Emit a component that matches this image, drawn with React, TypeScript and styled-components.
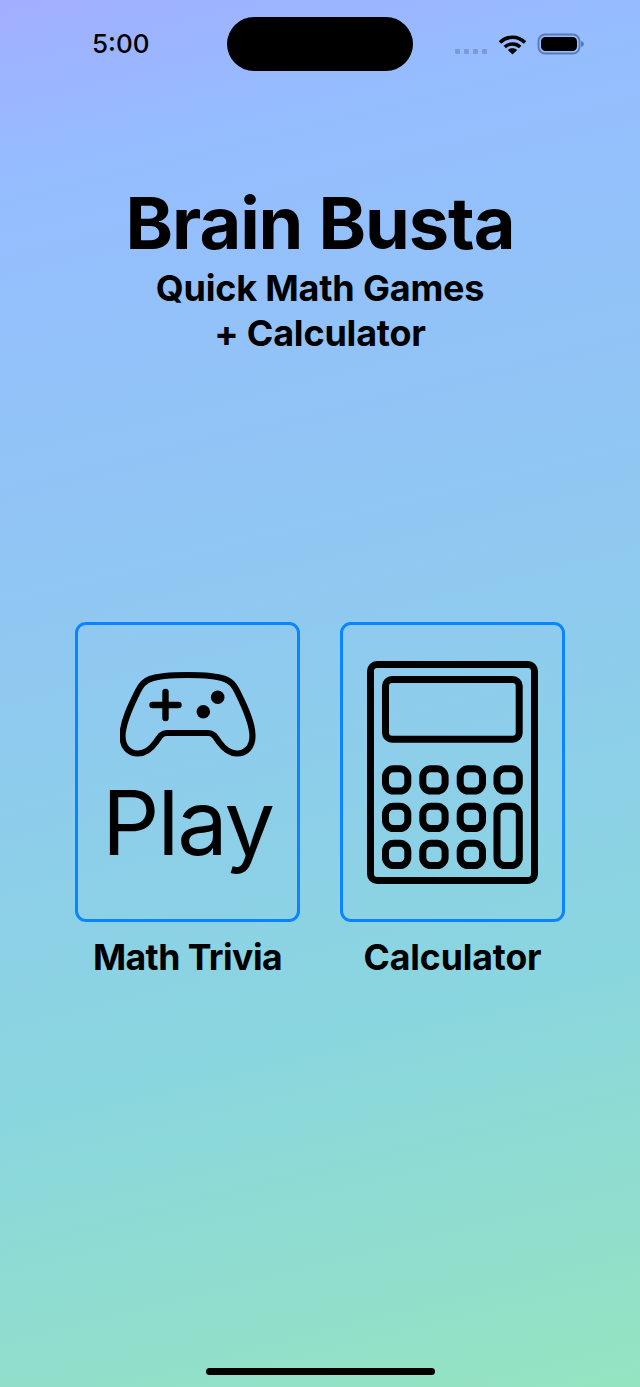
import * as React from 'react';
import styled, { createGlobalStyle } from 'styled-components';

const GlobalStyle = createGlobalStyle`
  html, body {
    margin: 0;
    padding: 0;
    background: #94e0c4;
  }
  * {
    box-sizing: border-box;
  }
`;

const Screen = styled.div`
  width: 640px;
  height: 1387px;
  display: flex;
  flex-direction: column;
  overflow: hidden;
  color: #000;
  font-family: Inter, "Liberation Sans", sans-serif;
  background: linear-gradient(166deg, #a2aeff 0%, #95bdff 12%, #8fc9f0 45%, #8ad6df 72%, #95e4c0 100%);
`;

const StatusBar = styled.div`
  display: flex;
  align-items: center;
  height: 54px;
  margin-top: 17px;
`;

const Time = styled.div`
  width: 227px;
  padding-left: 92px;
  font-size: 26px;
  font-weight: 500;
  line-height: 54px;
`;

const Island = styled.div`
  width: 186px;
  height: 54px;
  border-radius: 27px;
  background: #000;
`;

const StatusIcons = styled.div`
  display: flex;
  align-items: flex-start;
  height: 54px;
  padding: 16px 0 0 42px;
`;

const Header = styled.header`
  display: flex;
  flex-direction: column;
  align-items: center;
  margin-top: 108px;
`;

const Title = styled.h1`
  margin: 0;
  font-size: 72px;
  font-weight: 700;
  line-height: 88px;
  letter-spacing: -1.05px;
`;

const Subtitle = styled.p`
  margin: -1px 0 0;
  font-size: 36px;
  font-weight: 650;
  line-height: 45px;
  text-align: center;
  letter-spacing: -0.2px;
`;

const Menu = styled.main`
  display: flex;
  justify-content: center;
  gap: 40px;
  margin-top: 266px;
`;

const MenuItem = styled.div`
  display: flex;
  flex-direction: column;
  align-items: center;
  width: 225px;
`;

const Tile = styled.button`
  display: flex;
  flex-direction: column;
  align-items: center;
  justify-content: center;
  width: 225px;
  height: 300px;
  padding: 0;
  border: 3px solid #0a84ff;
  border-radius: 11px;
  background: transparent;
  color: #000;
  font-family: inherit;
`;

const PlayText = styled.span`
  font-size: 90px;
  font-weight: 400;
  line-height: 104px;
  margin-top: 13px;
  letter-spacing: -2px;
`;

const Label = styled.div<{ $tracking: number }>`
  margin-top: 13px;
  font-size: 35.6px;
  font-weight: 650;
  line-height: 46px;
  text-align: center;
  white-space: nowrap;
  letter-spacing: ${(props) => props.$tracking}px;
`;

const HomeIndicator = styled.div`
  width: 229px;
  height: 7px;
  margin: auto auto 12px;
  border-radius: 4px;
  background: #000;
`;

const StatusIconsSvg = () => (
  <svg width="130" height="24" viewBox="0 0 130 24">
    <g fill="#7c9ad6">
      <rect x="0" y="16" width="5" height="5" rx="1" />
      <rect x="9" y="16" width="5" height="5" rx="1" />
      <rect x="18" y="16" width="5" height="5" rx="1" />
      <rect x="27" y="16" width="5" height="5" rx="1" />
    </g>
    <g fill="none" stroke="#000" strokeWidth="3.6">
      <path d="M45 9.5 C52 2.5 63 2.5 70 9.5" />
      <path d="M49.8 14 C54 10 61 10 65.2 14" />
    </g>
    <path d="M57.5 21.5 L52.8 17 C55.5 14.8 59.5 14.8 62.2 17 Z" fill="#000" />
    <rect x="83.5" y="1.5" width="41" height="19" rx="6.5" fill="none" stroke="#5a7ab5" strokeWidth="1.8" />
    <rect x="86" y="4" width="36" height="14" rx="4.5" fill="#000" />
    <path d="M126 8 C128 8.5 129 10 129 11 C129 12 128 13.5 126 14 Z" fill="#5a7ab5" />
  </svg>
);

const GamepadIcon = () => (
  <svg width="136" height="88" viewBox="15 10 136 88">
    <path
      d="M82.5 15 C100 15 112 16 120 19 C126 21 129 25 132 31 C138 43 147.5 62 147.5 76 C147.5 87 141 93.5 132 93.5 C124 93.5 119 89 114 82 C110 76 108 73 103 73 L62 73 C57 73 55 76 51 82 C46 89 41 93.5 33 93.5 C24 93.5 17.5 87 17.5 76 C17.5 62 27 43 33 31 C36 25 39 21 45 19 C53 16 65 15 82.5 15 Z"
      fill="none"
      stroke="#000"
      strokeWidth="6.2"
      strokeLinejoin="round"
    />
    <path d="M47.5 45 H73.5 M60.5 32 V58" stroke="#000" strokeWidth="6.4" strokeLinecap="round" />
    <circle cx="112.7" cy="37.3" r="6.8" fill="#000" />
    <circle cx="98.3" cy="51.7" r="6.8" fill="#000" />
  </svg>
);

const keyColumns = [18.5, 55.8, 93.2];
const keyRows = [107.8, 145.2, 182.2];

const CalculatorIcon = () => (
  <svg width="171" height="223" viewBox="0 0 171 223" fill="none" stroke="#000" strokeWidth="7">
    <rect x="3.5" y="3.5" width="164" height="216" rx="6.5" />
    <rect x="18.5" y="18.5" width="133.7" height="59.7" rx="6.5" />
    {keyRows.map((y) =>
      keyColumns.map((x) => <rect key={`${x}-${y}`} x={x} y={y} width="22.3" height="22.3" rx="8" />)
    )}
    <rect x="130" y="107.8" width="22.3" height="22.3" rx="8" />
    <rect x="130" y="145.2" width="22.3" height="59.3" rx="8" />
  </svg>
);

const App: React.FC = () => {
  return (
    <Screen>
      <GlobalStyle />
      <StatusBar>
        <Time>5:00</Time>
        <Island />
        <StatusIcons>
          <StatusIconsSvg />
        </StatusIcons>
      </StatusBar>
      <Header>
        <Title>Brain Busta</Title>
        <Subtitle>
          Quick Math Games
          <br />+ Calculator
        </Subtitle>
      </Header>
      <Menu>
        <MenuItem>
          <Tile>
            <GamepadIcon />
            <PlayText>Play</PlayText>
          </Tile>
          <Label $tracking={-0.55}>Math Trivia</Label>
        </MenuItem>
        <MenuItem>
          <Tile>
            <CalculatorIcon />
          </Tile>
          <Label $tracking={-0.1}>Calculator</Label>
        </MenuItem>
      </Menu>
      <HomeIndicator />
    </Screen>
  );
};

export default App;
